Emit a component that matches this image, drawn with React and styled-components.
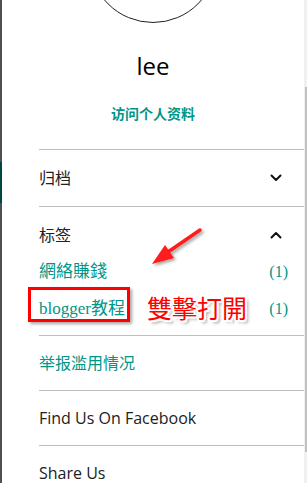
import React from "react";
import styled, { createGlobalStyle } from "styled-components";

const GlobalStyle = createGlobalStyle`
  html, body {
    margin: 0;
    padding: 0;
    background: #ffffff;
  }
  body {
    font-family: "Open Sans", "Noto Sans CJK SC", sans-serif;
    color: #212121;
  }
`;

const teal = "#009688";
const line = "#bdbdbd";

const Chevron = ({ up }) => (
  <svg width="12" height="8" viewBox="0 0 12 8">
    <polyline
      points={up ? "1.5,6.5 6,2 10.5,6.5" : "1.5,1.5 6,6 10.5,1.5"}
      fill="none"
      stroke="#111"
      strokeWidth="2"
      strokeLinecap="round"
      strokeLinejoin="round"
    />
  </svg>
);

const Arrow = () => (
  <ArrowSvg width="60" height="45" viewBox="0 0 60 45">
    <defs>
      <filter id="arrowShadow" x="-20%" y="-20%" width="150%" height="150%">
        <feDropShadow dx="2" dy="2" stdDeviation="1.5" floodColor="#000" floodOpacity="0.35" />
      </filter>
    </defs>
    <g filter="url(#arrowShadow)">
      <line x1="20" y1="26" x2="52" y2="4" stroke="#ff1a1a" strokeWidth="3.5" strokeLinecap="round" />
      <polygon points="4,38 26,32 17,19" fill="#ff1a1a" />
    </g>
  </ArrowSvg>
);

const App = () => {
  return (
    <>
      <GlobalStyle />
      <Frame>
        <Rail>
          <RailSegment $height={162} />
          <RailSegment $height={41} $accent />
          <RailSegment $grow />
        </Rail>

        <Content>
          <Profile>
            <Avatar />
            <Name>lee</Name>
            <ProfileLink>访问个人资料</ProfileLink>
          </Profile>

          <Sections>
            <Row $height={56} $right={22}>
              <RowLabel>归档</RowLabel>
              <Chevron />
            </Row>

            <LabelSection>
              <SectionHeader>
                <RowLabel>标签</RowLabel>
                <Chevron up />
              </SectionHeader>
              <LabelList>
                <LabelItem>
                  <LabelLink>網絡賺錢</LabelLink>
                  <Count>(1)</Count>
                </LabelItem>
                <LabelItem>
                  <Highlight />
                  <LabelLink>blogger教程</LabelLink>
                  <Callout>雙擊打開</Callout>
                  <Count>(1)</Count>
                </LabelItem>
              </LabelList>
              <Arrow />
            </LabelSection>

            <Row $height={54}>
              <RowLink>举报滥用情况</RowLink>
            </Row>
            <Row $height={54}>
              <RowLabel>Find Us On Facebook</RowLabel>
            </Row>
            <Row $height={54}>
              <RowLabel>Share Us</RowLabel>
            </Row>
          </Sections>
        </Content>

        <Scrollbar>
          <Thumb />
        </Scrollbar>
      </Frame>
    </>
  );
};

const Frame = styled.div`
  display: flex;
  width: 307px;
  height: 483px;
  overflow: hidden;
  background: #ffffff;
`;

const Rail = styled.div`
  display: flex;
  flex-direction: column;
  width: 2px;
  flex-shrink: 0;
`;

const RailSegment = styled.div`
  height: ${(p) => (p.$height ? `${p.$height}px` : "auto")};
  flex: ${(p) => (p.$grow ? 1 : "none")};
  background: ${(p) => (p.$accent ? "#00473d" : "#505050")};
`;

const Content = styled.div`
  flex: 1;
  display: flex;
  flex-direction: column;
  min-width: 0;
`;

const Profile = styled.div`
  display: flex;
  flex-direction: column;
  align-items: center;
  padding-bottom: 26px;
`;

const Avatar = styled.div`
  width: 128px;
  height: 128px;
  margin-top: -105px;
  border-radius: 50%;
  border: 1px solid #222;
  box-sizing: border-box;
  flex-shrink: 0;
`;

const Name = styled.div`
  margin-top: 27px;
  font-family: "Open Sans", sans-serif;
  font-size: 24px;
  line-height: 32px;
  color: #000;
`;

const ProfileLink = styled.div`
  margin-top: 21px;
  font-family: "Noto Sans CJK SC", sans-serif;
  font-size: 14px;
  font-weight: 700;
  line-height: 20px;
  color: ${teal};
`;

const Sections = styled.div`
  padding-left: 37px;
  display: flex;
  flex-direction: column;
`;

const Row = styled.div`
  display: flex;
  align-items: center;
  justify-content: space-between;
  height: ${(p) => p.$height}px;
  padding-right: ${(p) => p.$right || 16}px;
  border-top: 1px solid ${line};
  flex-shrink: 0;
`;

const RowLabel = styled.span`
  font-family: "Open Sans", "Noto Sans CJK SC", sans-serif;
  font-size: 16px;
  line-height: 22px;
  color: #212121;
`;

const RowLink = styled(RowLabel)`
  color: ${teal};
`;

const LabelSection = styled.div`
  position: relative;
  border-top: 1px solid ${line};
  padding: 17px 0 15px;
`;

const SectionHeader = styled.div`
  display: flex;
  align-items: center;
  justify-content: space-between;
  height: 22px;
  padding-right: 22px;
`;

const LabelList = styled.ul`
  list-style: none;
  margin: 15px 0 0;
  padding: 0;
  display: flex;
  flex-direction: column;
  gap: 15px;
`;

const LabelItem = styled.li`
  position: relative;
  display: flex;
  align-items: center;
  justify-content: space-between;
  height: 22px;
  padding-right: 16px;
`;

const LabelLink = styled.span`
  font-family: "Liberation Serif", "Noto Sans CJK TC", serif;
  font-size: 17px;
  line-height: 22px;
  color: ${teal};
`;

const Count = styled.span`
  font-family: "Liberation Serif", serif;
  font-size: 16px;
  line-height: 22px;
  color: ${teal};
`;

const Highlight = styled.div`
  position: absolute;
  left: -11px;
  top: -11px;
  width: 102px;
  height: 35px;
  box-sizing: border-box;
  border: 3px solid #ff0000;
  box-shadow: 2px 2px 3px rgba(0, 0, 0, 0.35);
  pointer-events: none;
`;

const Callout = styled.span`
  position: absolute;
  left: 108px;
  top: -6px;
  font-family: "Noto Sans CJK TC", sans-serif;
  font-size: 25px;
  font-weight: 400;
  line-height: 30px;
  color: #ff0000;
  text-shadow:
    2px 0 0 #fff, -2px 0 0 #fff, 0 2px 0 #fff, 0 -2px 0 #fff,
    1.5px 1.5px 0 #fff, -1.5px -1.5px 0 #fff, 1.5px -1.5px 0 #fff, -1.5px 1.5px 0 #fff,
    3px 3px 3px rgba(0, 0, 0, 0.4);
`;

const ArrowSvg = styled.svg`
  position: absolute;
  left: 109px;
  top: 19px;
  overflow: visible;
`;

const Scrollbar = styled.div`
  width: 3px;
  flex-shrink: 0;
  background: #f0f0f0;
  padding-top: 87px;
  box-sizing: border-box;
  display: flex;
  justify-content: flex-end;
`;

const Thumb = styled.div`
  width: 2px;
  height: 365px;
  background: #c1c1c1;
`;

export default App;
